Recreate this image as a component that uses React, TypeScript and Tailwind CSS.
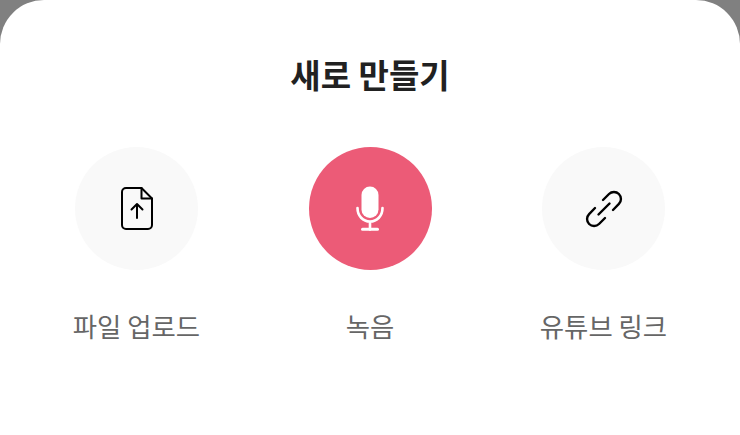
const font = { fontFamily: '"Noto Sans CJK KR", sans-serif' };
function Item({ label, active, children }: { label: string; active?: boolean; children: React.ReactNode }) {
  return (
    <div className="flex w-[233px] flex-col items-center">
      <div className={`flex h-[123px] w-[123px] items-center justify-center rounded-full ${active ? "bg-[#ec5b77]" : "bg-[#f9f9f9]"}`}>
        {children}
      </div>
      <div className="mt-[38px] text-[26.4px] leading-[36px] text-[#666666]">{label}</div>
    </div>
  );
}
export default function App() {
  return (
    <div className="h-[435px] w-[740px] overflow-hidden bg-[#808080]" style={font}>
      <div className="flex h-[435px] flex-col items-center rounded-t-[44px] bg-white">
        <h1 className="mt-[51px] text-[33px] font-bold leading-[46px] text-[#212121]">새로 만들기</h1>
        <div className="mt-[50px] flex w-[700px] justify-between">
          <Item label="파일 업로드">
            <svg width="32" height="43" viewBox="0 0 32 43" fill="none" stroke="#000" strokeWidth="2" strokeLinejoin="round" strokeLinecap="round">
              <path d="M5 1H20.500L31 11.500V38a4 4 0 0 1-4 4H5a4 4 0 0 1-4-4V5a4 4 0 0 1 4-4Z" />
              <path d="M20.500 1V11.500H31" />
              <path d="M16 31V17M10.500 22.500 16 17l5.500 5.500" />
            </svg>
          </Item>
          <Item label="녹음" active>
            <svg width="28" height="45" viewBox="0 0 28 45" fill="none">
              <rect x="5.500" y="0.500" width="17" height="31.500" rx="8.500" fill="#fff" />
              <path d="M1.500 22c0 8 5.500 13.500 12.500 13.500s12.500-5.500 12.500-13.500M14 35.500v8" stroke="#fff" strokeWidth="2.600" strokeLinecap="round" />
              <path d="M6.500 43.300h15" stroke="#fff" strokeWidth="3" strokeLinecap="round" />
            </svg>
          </Item>
          <Item label="유튜브 링크">
            <svg width="38" height="38" viewBox="0 0 38 38" fill="none" stroke="#000" strokeWidth="2.400" strokeLinecap="round">
              <path d="M18 10 24 4a7 7 0 0 1 9.900 9.900L28 20" />
              <path d="M13.500 24.500 24.500 13.500" />
              <path d="M20 28 14 34a7 7 0 0 1-9.900-9.900L10 18" />
            </svg>
          </Item>
        </div>
      </div>
    </div>
  );
}
